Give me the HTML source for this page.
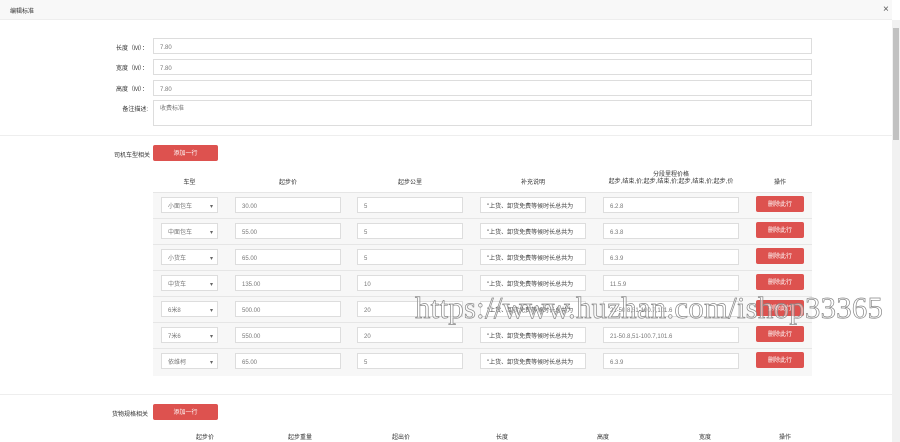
<!DOCTYPE html>
<html><head><meta charset="utf-8">
<style>
*{box-sizing:border-box;margin:0;padding:0}
body{width:900px;height:442px;overflow:hidden;background:#fff;font-family:"Liberation Sans","Noto Sans CJK SC",sans-serif;font-size:6px;color:#555;position:relative}
.a{position:absolute}
.hdr{left:0;top:0;width:892px;height:20px;background:#f8f8f8;border-bottom:1px solid #eee}
.inp{position:absolute;border:1px solid #ddd;background:#fff;font-size:6px;color:#777;padding-left:6px;padding-top:6px;line-height:7px}
.lbl{position:absolute;font-size:6px;color:#333;text-align:right;width:62px}
.btn{position:absolute;background:#dd524f;color:#fff;border-radius:2px;text-align:center;padding-top:6px;line-height:7px;font-size:6px}
.th{position:absolute;font-size:6px;color:#333;text-align:center}
.row{position:absolute;left:153px;width:659px;height:26px;background:#f7f7f7;border-top:1px solid #e6e6e6}
.sel::after{content:"▾";position:absolute;right:4px;top:6px;font-size:6px;color:#666}
</style></head><body>
<div class="a hdr"></div>
<div class="a" style="left:10px;top:6px;font-size:6px;color:#333">编辑标准</div>
<div class="a" style="left:883px;top:4px;font-size:10px;color:#555">×</div>
<div class="a" style="left:892px;top:20px;width:8px;height:422px;background:#f1f1f1"></div>
<div class="a" style="left:893px;top:28px;width:6px;height:112px;background:#c1c1c1"></div>

<div class="lbl" style="left:86px;top:43px">长度（M）：</div>
<div class="inp" style="left:153px;top:38px;width:659px;height:16px">7.80</div>
<div class="lbl" style="left:86px;top:63px">宽度（M）：</div>
<div class="inp" style="left:153px;top:59px;width:659px;height:16px">7.80</div>
<div class="lbl" style="left:86px;top:84px">高度（M）：</div>
<div class="inp" style="left:153px;top:80px;width:659px;height:16px">7.80</div>
<div class="lbl" style="left:86px;top:104px">备注描述:</div>
<div class="inp" style="left:153px;top:100px;width:659px;height:26px;padding-top:5px">收费标准</div>

<div class="a" style="left:0;top:135px;width:892px;height:1px;background:#eee"></div>
<div class="lbl" style="left:88px;top:150px">司机车型相关</div>
<div class="btn" style="left:153px;top:145px;width:65px;height:16px">添加一行</div>

<div class="th" style="left:161px;top:177px;width:57px">车型</div>
<div class="th" style="left:235px;top:177px;width:106px">起步价</div>
<div class="th" style="left:357px;top:177px;width:106px">起步公里</div>
<div class="th" style="left:480px;top:177px;width:106px">补充说明</div>
<div class="th" style="left:603px;top:172px;width:136px;line-height:7px">分段里程价格<br>起步,结束,价;起步,结束,价;起步,结束,价;起步,价</div>
<div class="th" style="left:756px;top:177px;width:48px">操作</div>

<div class="row" style="top:192px"></div>
<div class="row" style="top:218px"></div>
<div class="row" style="top:244px"></div>
<div class="row" style="top:270px"></div>
<div class="row" style="top:296px"></div>
<div class="row" style="top:322px"></div>
<div class="row" style="top:348px;height:28px"></div>

<div id="rows"></div>
<script>
var d=[["小面包车","30.00","5","6.2.8"],["中面包车","55.00","5","6.3.8"],["小货车","65.00","5","6.3.9"],["中货车","135.00","10","11.5.9"],["6米8","500.00","20","21-50.8,51-100.7,101.6"],["7米6","550.00","20","21-50.8,51-100.7,101.6"],["依维柯","65.00","5","6.3.9"]];
var h="";
d.forEach(function(r,i){var y=197+i*26;
h+='<div class="inp sel" style="left:161px;top:'+y+'px;width:57px;height:16px">'+r[0]+'</div>';
h+='<div class="inp" style="left:235px;top:'+y+'px;width:106px;height:16px">'+r[1]+'</div>';
h+='<div class="inp" style="left:357px;top:'+y+'px;width:106px;height:16px">'+r[2]+'</div>';
h+='<div class="inp" style="left:480px;top:'+y+'px;width:106px;height:16px;color:#444;white-space:nowrap;overflow:hidden">"上货、卸货免费等候时长总共为</div>';
h+='<div class="inp" style="left:603px;top:'+y+'px;width:136px;height:16px">'+r[3]+'</div>';
h+='<div class="btn" style="left:756px;top:'+(y-1)+'px;width:48px;height:16px">删除此行</div>';
});
document.getElementById("rows").innerHTML=h;
</script>

<div class="a" style="left:0;top:394px;width:892px;height:1px;background:#eee"></div>
<div class="lbl" style="left:86px;top:409px">货物规格相关</div>
<div class="btn" style="left:153px;top:404px;width:65px;height:16px">添加一行</div>
<div class="th" style="left:180px;top:432px;width:50px">起步价</div>
<div class="th" style="left:275px;top:432px;width:50px">起步重量</div>
<div class="th" style="left:376px;top:432px;width:50px">超出价</div>
<div class="th" style="left:477px;top:432px;width:50px">长度</div>
<div class="th" style="left:578px;top:432px;width:50px">高度</div>
<div class="th" style="left:680px;top:432px;width:50px">宽度</div>
<div class="th" style="left:760px;top:432px;width:50px">操作</div>

<div class="a" style="left:415px;top:291px;font-family:'Liberation Serif',serif;font-size:30.7px;letter-spacing:0.3px;color:rgba(255,255,255,0.5);-webkit-text-stroke:0.7px #888;white-space:nowrap">https://www.huzhan.com/ishop33365</div>
</body></html>
